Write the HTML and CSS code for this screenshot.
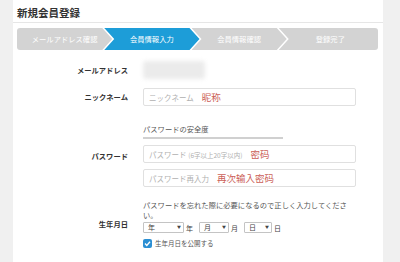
FILE: index.html
```html
<!DOCTYPE html>
<html lang="ja">
<head>
    <meta charset="UTF-8">
    <title>新規会員登録</title>
    <link rel="stylesheet" href="styles.css">
</head>
<body>
    <div class="card">
        <div class="title">新規会員登録</div>

        <div class="steps">
            <div class="step first">メールアドレス確認</div>
            <div class="step active">会員情報入力</div>
            <div class="step">会員情報確認</div>
            <div class="step last">登録完了</div>
        </div>

        <div class="row row-email">
            <div class="label">メールアドレス</div>
            <div class="field"><div class="blurred"></div></div>
        </div>

        <div class="row row-nick">
            <div class="label">ニックネーム</div>
            <div class="field">
                <div class="input"><span class="ph">ニックネーム</span><span class="note">昵称</span></div>
            </div>
        </div>

        <div class="row row-pass">
            <div class="label">パスワード</div>
            <div class="field">
                <div class="strength">パスワードの安全度</div>
                <div class="meter"></div>
                <div class="input"><span class="ph">パスワード <small>(6字以上20字以内)</small></span><span class="note">密码</span></div>
                <div class="input second"><span class="ph">パスワード再入力</span><span class="note">再次输入密码</span></div>
            </div>
        </div>

        <div class="row row-birth">
            <div class="label">生年月日</div>
            <div class="field">
                <div class="hint">パスワードを忘れた際に必要になるので正しく入力してください。</div>
                <div class="dates">
                    <span class="select year">年<i>▼</i></span><span class="unit">年</span>
                    <span class="select month">月<i>▼</i></span><span class="unit">月</span>
                    <span class="select day">日<i>▼</i></span><span class="unit">日</span>
                </div>
                <label class="check">
                    <span class="box">
                        <svg width="9" height="9" viewBox="0 0 9 9"><path d="M2 4.6 L3.8 6.4 L7 2.8" fill="none" stroke="#fff" stroke-width="1.4"/></svg>
                    </span>
                    生年月日を公開する
                </label>
            </div>
        </div>
    </div>
</body>
</html>
```

FILE: styles.css
```css
body {
    margin: 0;
    background: #f0f0f0;
    font-family: "Noto Sans CJK JP", "Noto Sans", sans-serif;
    color: #333;
}

.card {
    margin: 0 17px 0 13px;
    background: #fff;
    height: 262px;
    overflow: hidden;
}

.title {
    font-size: 10.5px;
    font-weight: bold;
    line-height: 13px;
    padding: 6px 0 3px 4px;
    border-bottom: 1px solid #e6e6e6;
}

.steps {
    display: flex;
    margin: 5px 5px 0 4px;
    height: 22px;
}

.step {
    flex: 1;
    margin-left: -8px;
    background: #d3d3d3;
    color: #fff;
    font-size: 7.3px;
    line-height: 22px;
    text-align: center;
    clip-path: polygon(0 0, calc(100% - 10px) 0, 100% 50%, calc(100% - 10px) 100%, 0 100%, 10px 50%);
}

.step.first {
    margin-left: 0;
    border-radius: 3px 0 0 3px;
    clip-path: polygon(0 0, calc(100% - 10px) 0, 100% 50%, calc(100% - 10px) 100%, 0 100%);
}

.step.last {
    border-radius: 0 3px 3px 0;
    padding-left: 4px;
    clip-path: polygon(0 0, 100% 0, 100% 100%, 0 100%, 10px 50%);
}

.step.active {
    background: #1d9dd8;
}

.row {
    display: grid;
    grid-template-columns: 115px 213px;
    column-gap: 15px;
    align-items: center;
}

.label {
    text-align: right;
    font-size: 7.3px;
    font-weight: bold;
}

.row-email {
    margin-top: 11px;
    height: 18px;
}

.blurred {
    width: 62px;
    height: 18px;
    background: #ebebeb;
    border-radius: 3px;
    filter: blur(2px);
}

.row-nick {
    margin-top: 9px;
}

.input {
    height: 18px;
    box-sizing: border-box;
    border: 1px solid #e0e0e0;
    border-radius: 2px;
    padding-left: 5px;
    display: flex;
    align-items: center;
    white-space: nowrap;
}

.ph {
    color: #b0b0b0;
    font-size: 7.5px;
}

.ph small {
    font-size: 6.5px;
}

.note {
    color: #cc5f59;
    font-size: 9.5px;
    margin-left: 8px;
}

.row-pass {
    margin-top: 18px;
}

.strength {
    font-size: 7.3px;
    line-height: 10px;
    color: #555;
}

.meter {
    width: 140px;
    height: 2px;
    background: #d0d0d0;
    margin-top: 3px;
}

.row-pass .input {
    margin-top: 6px;
}

.row-pass .input.second {
    margin-top: 6px;
}

.row-birth {
    margin-top: 13px;
}

.hint {
    font-size: 7.3px;
    line-height: 10px;
    color: #555;
}

.dates {
    display: flex;
    align-items: center;
    margin-top: 2px;
    font-size: 7px;
    color: #444;
}

.select {
    height: 11px;
    box-sizing: border-box;
    border: 1px solid #c4c4c4;
    border-radius: 1px;
    padding: 0 2px 0 4px;
    display: flex;
    align-items: center;
    justify-content: space-between;
    line-height: 9px;
}

.select i {
    font-style: normal;
    font-size: 4px;
}

.year { width: 41px; }
.month { width: 30px; }
.day { width: 28px; }

.unit {
    margin: 0 6px 0 2px;
}

.check {
    display: flex;
    align-items: center;
    gap: 3px;
    margin-top: 5px;
    font-size: 6.5px;
    color: #555;
}

.box {
    width: 9px;
    height: 9px;
    border-radius: 2px;
    background: #2b8fd3;
    display: flex;
}
```
